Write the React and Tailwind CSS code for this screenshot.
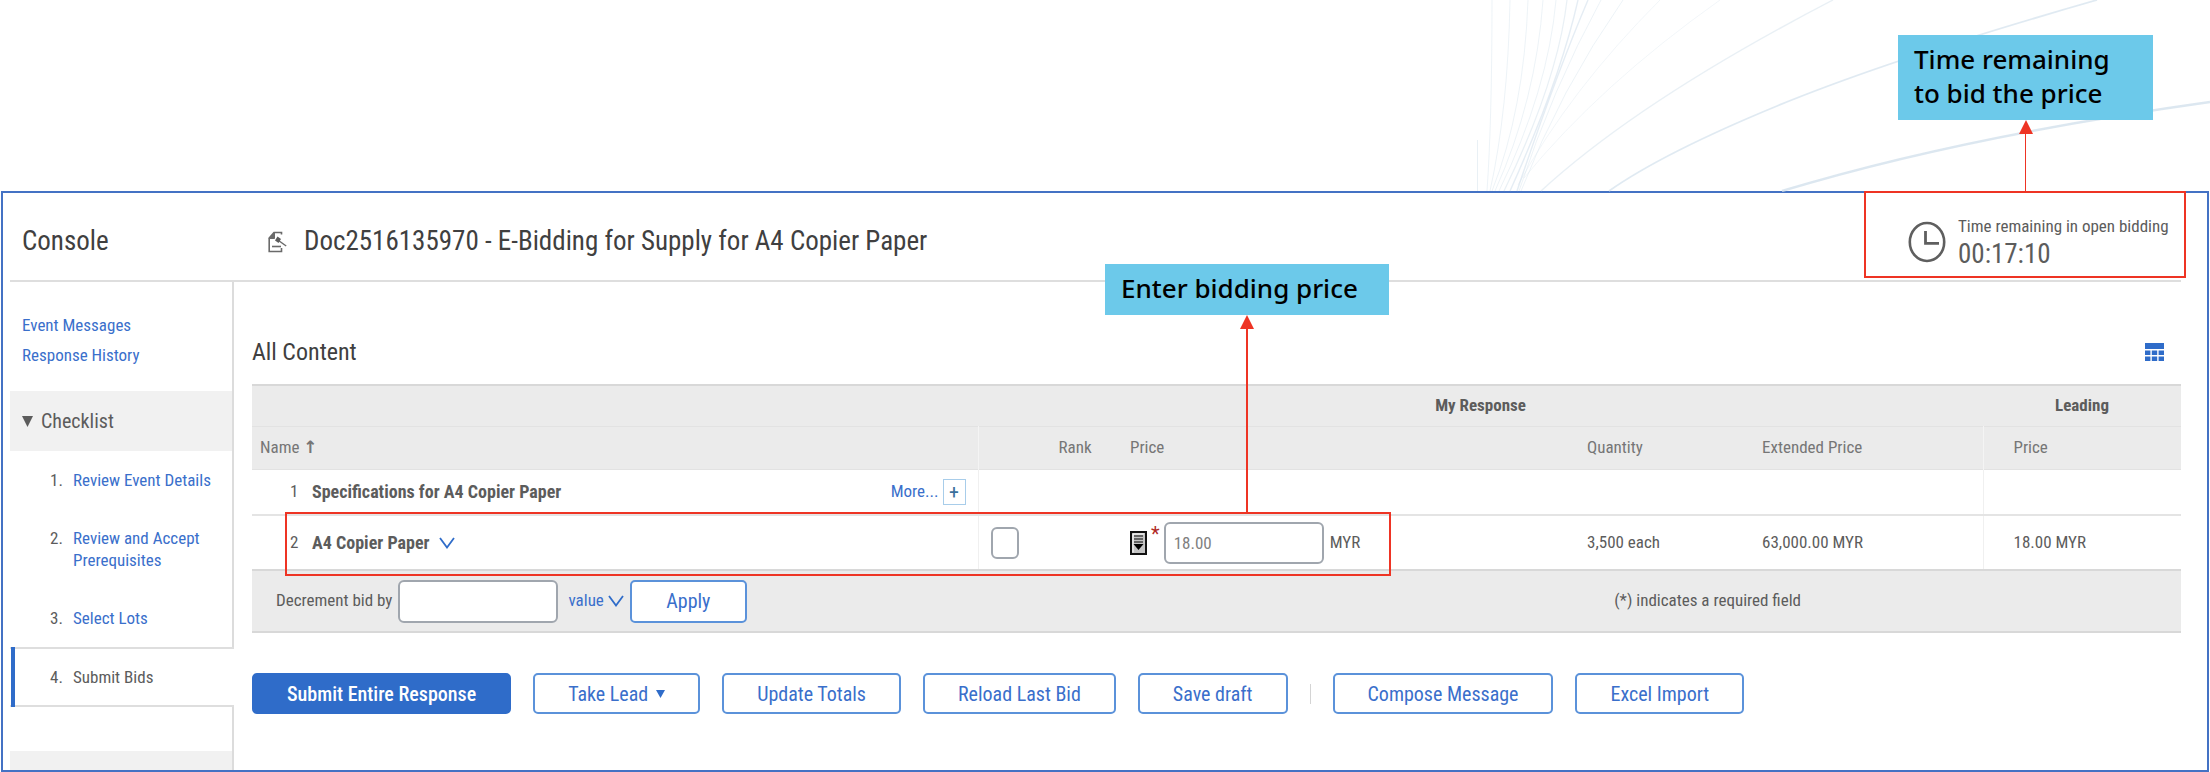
import React, { useState } from 'react';
import clsx from 'clsx';

const checklist = ['Review Event Details', 'Review and Accept Prerequisites', 'Select Lots', 'Submit Bids'];

// Faint strands behind the page heading
const strands = [
  { d: 'M1782 191 Q1960 137 2210 102', w: 2.4, o: 0.8 },
  { d: 'M1609 191 Q1663 153 1777 106 T2097 0', w: 1.8, o: 0.7 },
  { d: 'M1541 191 Q1640 100 1833 0', w: 1.4, o: 0.5 },
  { d: 'M1524 178 Q1600 85 1720 0', w: 1, o: 0.3 },
  { d: 'M1518 185 Q1570 90 1660 0', w: 1, o: 0.3 },
  { d: 'M1477.5 140 V191', w: 1, o: 0.5 },
  { d: 'M1492 0 Q1492 120 1487 191', w: 1, o: 0.4 },
  { d: 'M1510 0 Q1508 110 1490 191', w: 1, o: 0.4 },
  { d: 'M1528 0 Q1524 110 1492 191', w: 1, o: 0.4 },
  { d: 'M1543 0 Q1536 100 1495 191', w: 1, o: 0.4 },
  { d: 'M1556 0 Q1548 90 1499 191', w: 1, o: 0.4 },
  { d: 'M1567 0 Q1558 80 1504 191', w: 1.2, o: 0.5 },
  { d: 'M1578 0 Q1560 80 1510 191', w: 1.4, o: 0.6 },
  { d: 'M1588 0 Q1556 75 1517 191', w: 1.4, o: 0.6 },
  { d: 'M1601 0 Q1552 90 1519 191', w: 1, o: 0.4 },
  { d: 'M1623 0 Q1560 90 1521 191', w: 1, o: 0.4 }
];

const Backdrop = () => (
  <svg className="absolute right-0 top-0" width="740" height="192" viewBox="1470 0 740 192" fill="none" aria-hidden="true">
    {strands.map((s) => (
      <path key={s.d} d={s.d} stroke="#d3e1ec" strokeWidth={s.w} opacity={s.o} />
    ))}
  </svg>
);

const Chevron = () => (
  <svg width="16" height="12" viewBox="0 0 16 12" fill="none" aria-hidden="true">
    <path d="M1 1 L8 10.5 L15 1" stroke="#2f6cc9" strokeWidth="1.8" />
  </svg>
);

const DocIcon = () => (
  <svg className="shrink-0" width="19" height="22" viewBox="0 0 19 22" fill="none" stroke="#6a6a6a" strokeWidth="1.6" aria-hidden="true">
    <path d="M13.5 3.5 V1.5 H6 L1.2 7 V20.5 H13.5 V17" />
    <path d="M1 7.5 L6.5 1.5 V7.5 Z" fill="#6a6a6a" strokeWidth="1" />
    <path d="M4 15.5 H13" />
    <path d="M10.5 9.5 L18.2 15" strokeWidth="1.5" />
    <path d="M9.5 5.5 L13 8 L10.5 12 L7 9.5 Z" fill="#5c5c5c" stroke="none" />
  </svg>
);

const ClockIcon = () => (
  <svg className="shrink-0" width="38" height="42" viewBox="0 0 38 42" fill="none" stroke="#5f5f5f" aria-hidden="true">
    <ellipse cx="19" cy="21" rx="17.2" ry="19" strokeWidth="2.6" />
    <path d="M17.5 10 V22.3 H31" strokeWidth="2.8" />
  </svg>
);

const TableIcon = () => (
  <svg width="19" height="18" viewBox="0 0 19 18" fill="#2f6cc9" aria-hidden="true">
    <path d="M0 0h19v6H0zM0 7.5h5.4v4.5H0zM6.8 7.5h5.4v4.5H6.8zM13.6 7.5H19v4.5h-5.4zM0 13.5h5.4V18H0zM6.8 13.5h5.4V18H6.8zM13.6 13.5H19V18h-5.4z" />
  </svg>
);

const PriceTermsIcon = () => (
  <svg width="17" height="24" viewBox="0 0 17 24" aria-hidden="true">
    <rect x="1" y="1" width="15" height="22" fill="#c4c4c4" stroke="#111" strokeWidth="2" />
    <path d="M3 21.5V3H14" fill="none" stroke="#fff" />
    <path d="M4 5h9M4 8h9M4 11h9" stroke="#444" strokeWidth="1.3" />
    <path d="M3.5 13h10l-5 6z" fill="#000" />
  </svg>
);

const Callout = ({ className, lineClass, children, thin }) => (
  <div className={clsx('absolute bottom-full flex flex-col items-center', className)}>
    <p className="w-full bg-[#6cc9ea] px-4 pt-[7px] pb-2.5 font-['Noto_Sans'] text-[26px] leading-[34px] font-medium whitespace-nowrap text-black">
      {children}
    </p>
    <div className={clsx('flex flex-col items-center', lineClass)}>
      <svg width="14" height="14" viewBox="0 0 14 14" aria-hidden="true">
        <path d="M7 0 L14 14 H0 Z" fill="#ee3424" />
      </svg>
      <span className={clsx('flex-1 bg-[#ee3424]', thin ? 'w-px' : 'w-0.5')} />
    </div>
  </div>
);

const ActionButton = ({ primary, children }) => (
  <button
    type="button"
    className={clsx(
      'flex h-[41px] items-center gap-2 rounded-[5px] border-2 px-[33px] text-xl whitespace-nowrap',
      primary ? 'border-[#2f6cc9] bg-[#2f6cc9] font-medium text-white' : 'border-[#5b92da] bg-white text-[#3a6fcb]'
    )}
  >
    {children}
  </button>
);

const App = () => {
  const [price, setPrice] = useState('18.00');
  const [decrement, setDecrement] = useState('');

  return (
    <div className="relative flex min-h-screen flex-col overflow-x-hidden bg-white pt-[191px] font-['Roboto_Condensed',Roboto,sans-serif] text-[17px] text-[#5c5c5c]">
      <Backdrop />
      <main className="mx-px flex flex-1 flex-col border-2 border-[#4472c4] bg-white pr-[26px] pl-[7px]">
        <header className="flex h-[89px] items-stretch border-b-2 border-[#dedede] pl-3 text-[27px] text-[#404040]">
          <h1 className="flex w-[246px] items-center pt-2.5">Console</h1>
          <h2 className="flex flex-1 items-center gap-[17px] pt-2.5">
            <DocIcon />
            Doc2516135970 - E-Bidding for Supply for A4 Copier Paper
          </h2>
          <div className="relative flex w-[317px] items-center gap-3 pt-2.5 pl-11">
            <ClockIcon />
            <div className="text-[#5c5c5c]">
              <p className="text-[17px] leading-6 whitespace-nowrap">Time remaining in open bidding</p>
              <p className="leading-8">00:17:10</p>
            </div>
            <div className="absolute -top-0.5 -right-[5px] bottom-0.5 left-0 border-2 border-[#ee3424]" />
            <Callout className="left-[34px] w-[255px]" lineClass="h-[73px]" thin>
              Time remaining
              <br />
              to bid the price
            </Callout>
          </div>
        </header>

        <div className="flex flex-1">
          <aside className="flex w-[224px] flex-col">
            <nav className="flex flex-col border-r-2 border-[#dcdcdc] pt-7 pb-[21px] pl-3 leading-[30px] text-[#3a6fcb]">
              <a href="#messages">Event Messages</a>
              <a href="#history">Response History</a>
            </nav>
            <button type="button" className="flex h-[60px] items-center gap-2 border-r-2 border-[#dcdcdc] bg-[#f1f1f1] pl-3 text-xl">
              <svg width="11" height="11" viewBox="0 0 11 11" aria-hidden="true">
                <path d="M0 0h11L5.5 11z" fill="#5c5c5c" />
              </svg>
              Checklist
            </button>
            <ol className="leading-[22px]">
              {checklist.map((step, i) => (
                <li
                  key={step}
                  className={clsx(
                    'flex pr-4 pl-10',
                    i === 3 ? 'relative border-y-2 border-[#dedede] py-[17px]' : 'border-r-2 border-[#dcdcdc] py-[18px]'
                  )}
                >
                  {i === 3 && <span className="absolute -inset-y-0.5 left-px w-1 bg-[#2f6cc9]" />}
                  <span className="w-[23px] shrink-0">{i + 1}.</span>
                  {i === 3 ? step : <a href={`#step-${i + 1}`} className="text-[#3a6fcb]">{step}</a>}
                </li>
              ))}
            </ol>
            <div className="flex flex-1 flex-col justify-end border-r-2 border-[#dcdcdc]">
              <div className="h-[19px] bg-[#f1f1f1]" />
            </div>
          </aside>

          <section className="flex-1 pt-[54px] pb-14 pl-[18px]">
            <div className="mb-4 flex h-8 items-center justify-between pr-[17px]">
              <h3 className="text-2xl text-[#404040]">All Content</h3>
              <button type="button" aria-label="Table options">
                <TableIcon />
              </button>
            </div>

            <div className="relative">
              <table className="w-full table-fixed border-collapse text-left">
                <colgroup>
                  <col className="w-[726px]" />
                  <col className="w-[142px]" />
                  <col className="w-[457px]" />
                  <col className="w-[175px]" />
                  <col />
                  <col className="w-[198px]" />
                </colgroup>
                <thead className="bg-[#ebebeb] text-[#767676]">
                  <tr className="h-[41px] border-t-2 border-b border-t-[#d8d8d8] border-b-[#e2e2e2] text-[#5c5c5c]">
                    <th />
                    <th colSpan="4" className="text-center font-bold">My Response</th>
                    <th className="text-center font-bold">Leading</th>
                  </tr>
                  <tr className="h-[43px] border-b border-[#e2e2e2]">
                    <th className="border-r border-[#f4f4f4] pl-2 font-normal">
                      Name <span className="font-['DejaVu_Sans'] font-bold">↑</span>
                    </th>
                    <th className="pl-20 font-normal">Rank</th>
                    <th className="pl-2.5 font-normal">Price</th>
                    <th className="pl-2.5 font-normal">Quantity</th>
                    <th className="border-r border-[#f4f4f4] pl-2.5 font-normal">Extended Price</th>
                    <th className="pl-[30px] font-normal">Price</th>
                  </tr>
                </thead>
                <tbody>
                  <tr className="h-[46px] border-b-2 border-[#e4e4e4]">
                    <td className="border-r border-[#f0f0f0] pr-3 pl-[38px]">
                      <div className="flex items-center">
                        <span className="w-[22px]">1</span>
                        <strong className="flex-1 text-lg">Specifications for A4 Copier Paper</strong>
                        <a href="#more" className="text-[#3a6fcb]">More...</a>
                        <button type="button" aria-label="Expand" className="ml-1 h-[26px] w-[23px] border border-[#a8cdea] text-xl leading-5 text-[#3a6f9b]">
                          +
                        </button>
                      </div>
                    </td>
                    <td />
                    <td />
                    <td />
                    <td className="border-r border-[#f0f0f0]" />
                    <td />
                  </tr>
                  <tr className="h-[54px]">
                    <td className="border-r border-[#f0f0f0] pl-[38px]">
                      <div className="flex items-center">
                        <span className="w-[22px]">2</span>
                        <strong className="text-lg">A4 Copier Paper</strong>
                        <button type="button" aria-label="Item actions" className="ml-2.5">
                          <Chevron />
                        </button>
                      </div>
                    </td>
                    <td className="pl-3">
                      <input
                        type="checkbox"
                        aria-label="Select A4 Copier Paper"
                        className="block h-8 w-7 appearance-none rounded-md border-2 border-[#a0a6ae]"
                      />
                    </td>
                    <td className="pl-2.5">
                      <div className="flex items-center">
                        <PriceTermsIcon />
                        <span className="mx-1 self-start text-xl leading-6 text-[#b02a25]">*</span>
                        <input
                          type="text"
                          aria-label="Price in MYR"
                          value={price}
                          onChange={(e) => setPrice(e.target.value)}
                          className="h-[42px] w-[160px] rounded-md border-2 border-[#a0a6ae] bg-white px-2 text-[#808080]"
                        />
                        <span className="ml-1.5">MYR</span>
                      </div>
                    </td>
                    <td className="pl-2.5">3,500 each</td>
                    <td className="border-r border-[#f0f0f0] pl-2.5">63,000.00 MYR</td>
                    <td className="pl-[30px]">18.00 MYR</td>
                  </tr>
                </tbody>
              </table>

              <div className="flex h-[64px] items-center border-y-2 border-[#d8d8d8] bg-[#ebebeb] pr-[380px] pl-6">
                <label htmlFor="decrement">Decrement bid by</label>
                <input
                  id="decrement"
                  type="text"
                  value={decrement}
                  onChange={(e) => setDecrement(e.target.value)}
                  className="ml-1.5 h-[43px] w-[160px] rounded-md border-2 border-[#a0a6ae] bg-white px-2"
                />
                <button type="button" className="ml-2.5 flex items-center gap-1 text-[#3a6fcb]">
                  value
                  <Chevron />
                </button>
                <button type="button" className="ml-1.5 h-[43px] w-[117px] rounded-[5px] border-2 border-[#5b92da] bg-white text-xl text-[#3a6fcb]">
                  Apply
                </button>
                <span className="ml-auto">(*) indicates a required field</span>
              </div>

              {/* Marks the row where the bid is entered */}
              <div className="pointer-events-none absolute top-32 left-[33px] h-16 w-[1106px] border-2 border-[#ee3424]">
                <Callout className="right-0 w-[284px]" lineClass="h-[199px]">
                  Enter bidding price
                </Callout>
              </div>
            </div>

            <div className="mt-10 flex items-center gap-[22px]">
              <ActionButton primary>Submit Entire Response</ActionButton>
              <ActionButton>
                Take Lead
                <svg width="9" height="8" viewBox="0 0 9 8" aria-hidden="true">
                  <path d="M0 0h9L4.5 8z" fill="#2f6cc9" />
                </svg>
              </ActionButton>
              <ActionButton>Update Totals</ActionButton>
              <ActionButton>Reload Last Bid</ActionButton>
              <ActionButton>Save draft</ActionButton>
              <span className="h-5 w-px bg-[#d4d4d4]" />
              <ActionButton>Compose Message</ActionButton>
              <ActionButton>Excel Import</ActionButton>
            </div>
          </section>
        </div>
      </main>
    </div>
  );
};

export default App;
